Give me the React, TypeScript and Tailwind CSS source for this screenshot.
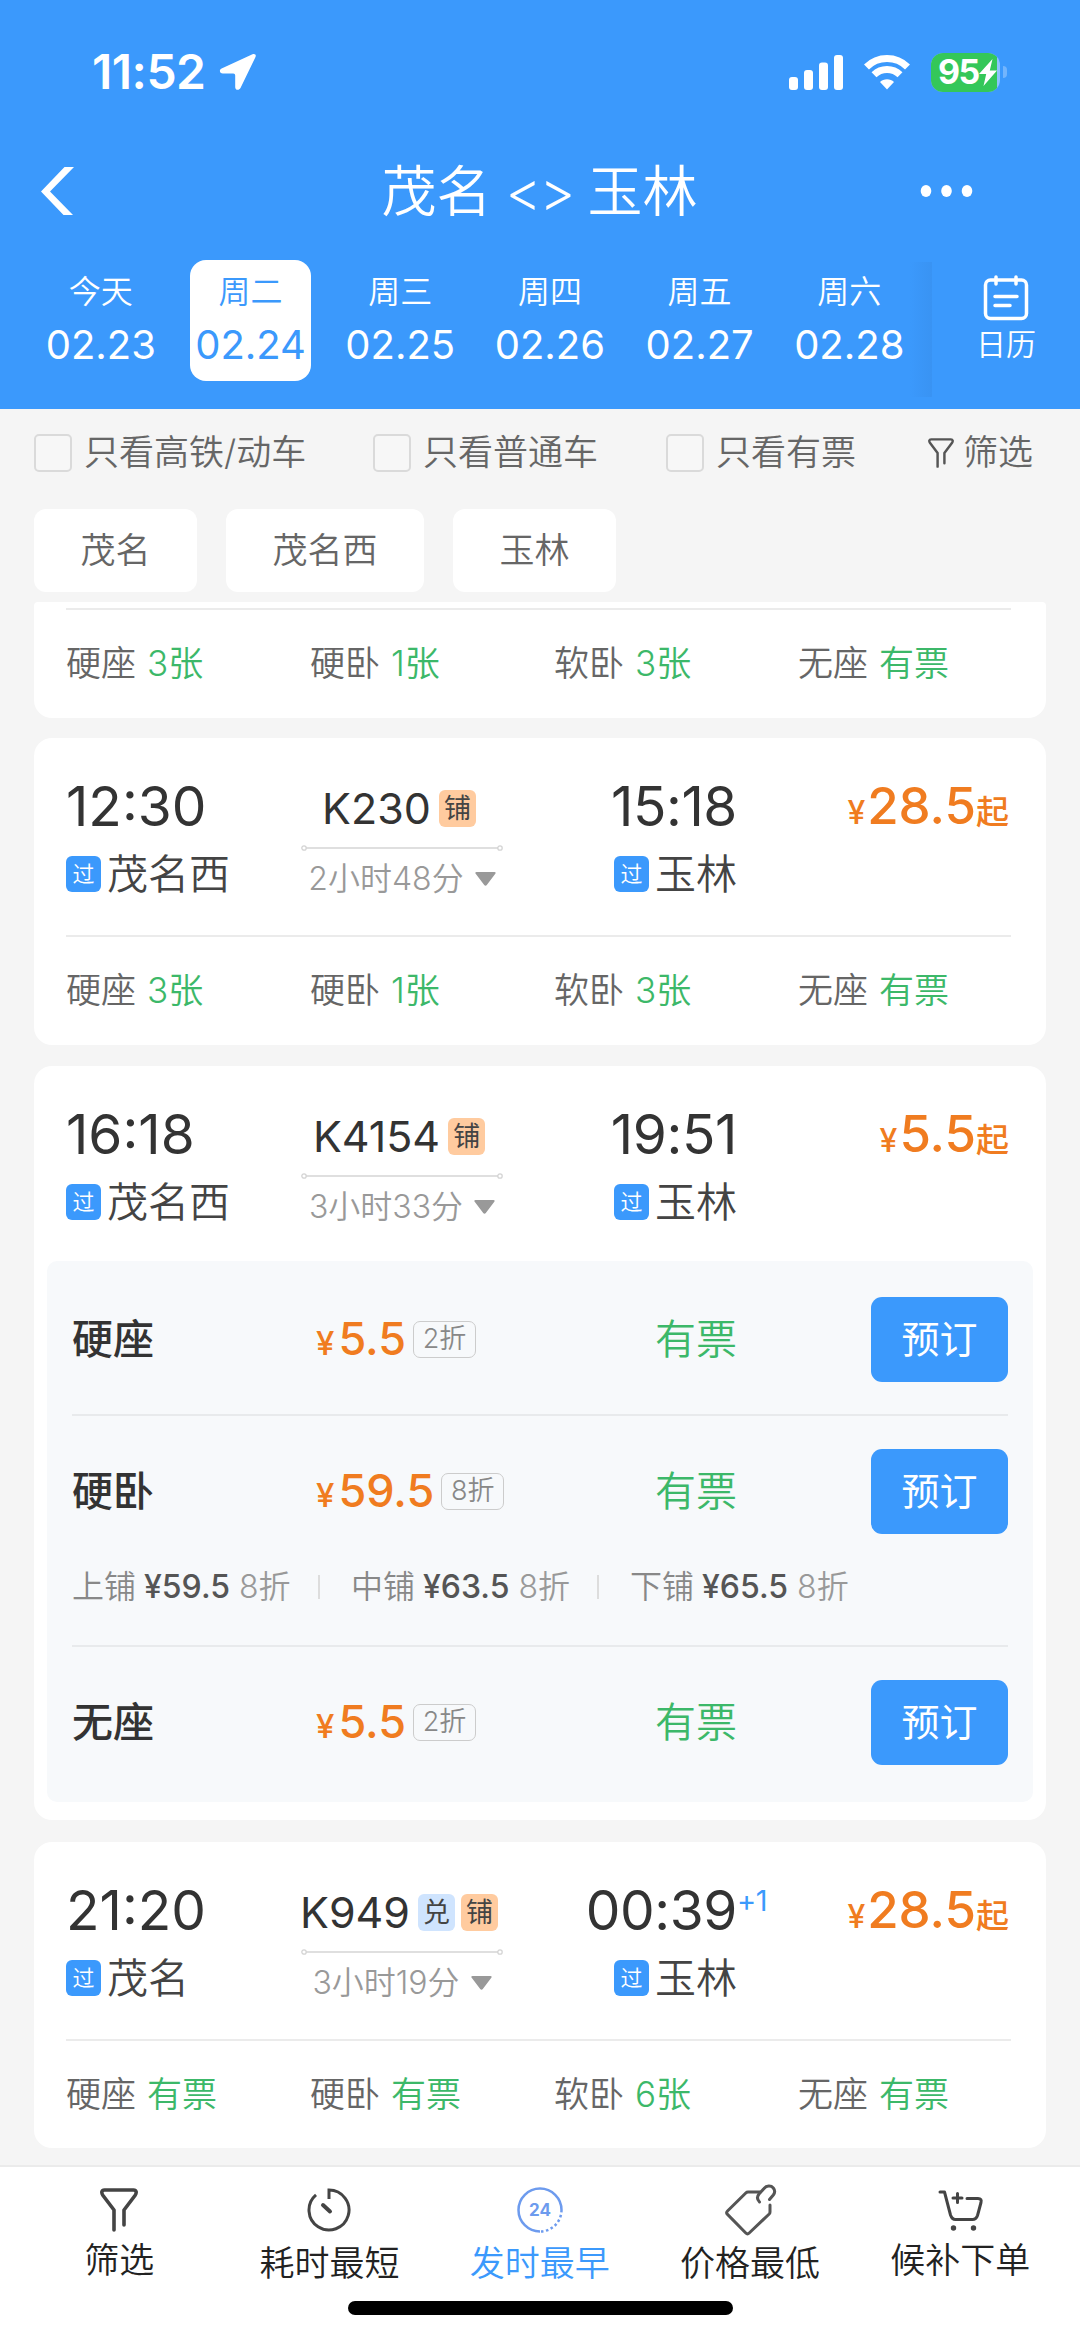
import type { ReactNode } from 'react';

interface Seat {
  name: string;
  left: string;
}

interface Train {
  code: string;
  tags: string[];
  depart: string;
  from: string;
  arrive: string;
  to: string;
  duration: string;
  price: string;
  nextDay?: boolean;
}

const days = [
  { label: '今天', date: '02.23' },
  { label: '周二', date: '02.24', active: true },
  { label: '周三', date: '02.25' },
  { label: '周四', date: '02.26' },
  { label: '周五', date: '02.27' },
  { label: '周六', date: '02.28' },
];

const daySeats: Seat[] = [
  { name: '硬座', left: '3张' },
  { name: '硬卧', left: '1张' },
  { name: '软卧', left: '3张' },
  { name: '无座', left: '有票' },
];

const nightSeats: Seat[] = [
  { name: '硬座', left: '有票' },
  { name: '硬卧', left: '有票' },
  { name: '软卧', left: '6张' },
  { name: '无座', left: '有票' },
];

const k230: Train = {
  code: 'K230', tags: ['铺'], depart: '12:30', from: '茂名西',
  arrive: '15:18', to: '玉林', duration: '2小时48分', price: '28.5',
};

const k4154: Train = {
  code: 'K4154', tags: ['铺'], depart: '16:18', from: '茂名西',
  arrive: '19:51', to: '玉林', duration: '3小时33分', price: '5.5',
};

const k949: Train = {
  code: 'K949', tags: ['兑', '铺'], depart: '21:20', from: '茂名',
  arrive: '00:39', to: '玉林', duration: '3小时19分', price: '28.5', nextDay: true,
};

const berths = [
  { name: '上铺', price: '¥59.5' },
  { name: '中铺', price: '¥63.5' },
  { name: '下铺', price: '¥65.5' },
];

function StatusBar() {
  return (
    <div className="flex h-[144px] items-center justify-between pl-[92px] pr-[73px] text-white">
      <div className="flex items-center gap-[13px]">
        <span className="text-[48px] font-semibold leading-none tracking-[-0.5px]">11:52</span>
        <svg width="38" height="38" viewBox="0 0 38 38" fill="white">
          <path d="M33.5 1.3c2.2-1 4 .5 3 2.7L21.5 35c-1.5 2.8-5.3 2.2-5.3-.8V22.5c0-1.3-.7-2-2-2H3.8C.6 20.5-.2 17 2.6 15.600z" />
        </svg>
      </div>
      <div className="flex items-center">
        <svg width="56" height="38" viewBox="0 0 56 38" fill="white">
          <rect x="1" y="24" width="9" height="13" rx="3" />
          <rect x="16" y="17" width="9" height="20" rx="3" />
          <rect x="31" y="9.5" width="9" height="27.5" rx="3" />
          <rect x="46" y="2" width="9" height="35" rx="3" />
        </svg>
        <svg className="ml-[19px]" width="48" height="36" viewBox="0 0 48 36" fill="none" stroke="white" strokeWidth="7">
          <path d="M3.5 13a29 29 0 0 1 41 0" />
          <path d="M11 20.8a18.5 18.5 0 0 1 26 0" />
          <path d="M24 35.5l-7-7.5c3.6-3.8 10.4-3.8 14 0z" fill="white" stroke="none" />
        </svg>
        <div className="ml-[20px] flex h-[39px] w-[69px] overflow-hidden rounded-[12px] bg-[#8dc3fd]">
          <div className="flex h-full w-[66px] items-center bg-[#34c759] pl-[7px]">
            <span className="text-[34px] font-bold leading-none tracking-[-1.5px]">95</span>
            <svg width="18" height="27" viewBox="0 0 18 27" fill="white">
              <path d="M13.5 0L0 15h7.2L4.5 27 18 11.5h-7.2z" />
            </svg>
          </div>
        </div>
        <div className="ml-[3px] h-[12px] w-[4px] rounded-r-[4px] bg-[#72b5fd]" />
      </div>
    </div>
  );
}

function Header() {
  return (
    <header className="h-[409px] bg-[#3b99fc] text-white">
      <StatusBar />
      <div className="flex h-[94px] items-center justify-between pl-[41px] pr-[107px]">
        <svg width="34" height="48" viewBox="0 0 34 48" fill="white">
          <path d="M23.5 0H33L9 24.5 32 48h-9.5L0 24.5z" />
        </svg>
        <h1 className="ml-[84px] flex text-[55px] font-[350] leading-none">
          <span>茂名</span>
          <span className="mx-[14px] tracking-[-2px]">&lt;&gt;</span>
          <span>玉林</span>
        </h1>
        <svg width="53" height="14" viewBox="0 0 53 14" fill="white">
          <ellipse cx="6" cy="7" rx="5.3" ry="6" />
          <ellipse cx="26.5" cy="7" rx="5.3" ry="6" />
          <ellipse cx="47" cy="7" rx="5.3" ry="6" />
        </svg>
      </div>
      <div className="flex h-[171px] pl-[26px]">
        {days.map((day) => (
          <div key={day.date} className="flex w-[149.7px] shrink-0 justify-center pt-[22px]">
            <div
              className={`flex h-[121px] w-[121px] flex-col items-center rounded-[16px] pt-[15px] ${
                day.active ? 'bg-white text-[#3b99fc]' : ''
              }`}
            >
              <span className="text-[32px] font-[350] leading-[34px]">{day.label}</span>
              <span className="mt-[14px] text-[40px] leading-[44px]">{day.date}</span>
            </div>
          </div>
        ))}
        <div className="-ml-[14px] mt-[24px] h-[135px] w-[22px] bg-gradient-to-r from-[#3b99fc] to-[#3993f3]" />
        <div className="flex flex-1 flex-col items-center pt-[37px]">
          <svg width="46" height="46" viewBox="0 0 46 46" fill="none" stroke="white" strokeWidth="3.5" strokeLinecap="round">
            <rect x="2.5" y="5" width="41" height="38.5" rx="5" />
            <path d="M13 2v7M33 2v7M12 21.5h22M12 30.5h15" />
          </svg>
          <span className="mt-[6px] text-[30px] font-[350] leading-[34px]">日历</span>
        </div>
      </div>
    </header>
  );
}

function Funnel({ width, height, color }: { width: number; height: number; color: string }) {
  return (
    <svg width={width} height={height} viewBox="0 0 38 44" fill="none" stroke={color} strokeWidth="3.6" strokeLinecap="round" strokeLinejoin="round">
      <path d="M14 42V22L3 7.5C1 4.5 1.6 2 4.5 2h29c2.9 0 3.5 2.5 1.5 5.5L24 22v15" />
    </svg>
  );
}

function Check({ label, className }: { label: string; className: string }) {
  return (
    <label className={`flex items-center gap-[12px] ${className}`}>
      <span className="h-[38px] w-[38px] rounded-[5px] border-2 border-[#dadada] bg-[#f7f7f7]" />
      <span>{label}</span>
    </label>
  );
}

function Filters() {
  return (
    <div className="h-[193px] px-[34px] text-[35px] font-[350] text-[#666]">
      <div className="flex h-[87px] items-center">
        <Check label="只看高铁/动车" className="w-[339px]" />
        <Check label="只看普通车" className="w-[293px]" />
        <Check label="只看有票" className="w-[262px]" />
        <Funnel width={26} height={30} color="#555" />
        <span className="ml-[9px]">筛选</span>
      </div>
      <div className="mt-[13px] flex gap-[29px]">
        <span className="flex h-[83px] w-[163px] items-center justify-center rounded-[12px] bg-white">茂名</span>
        <span className="flex h-[83px] w-[198px] items-center justify-center rounded-[12px] bg-white">茂名西</span>
        <span className="flex h-[83px] w-[163px] items-center justify-center rounded-[12px] bg-white">玉林</span>
      </div>
    </div>
  );
}

function Station({ name }: { name: string }) {
  return (
    <div className="flex h-[42px] items-center gap-[6px] text-[41px] font-[350] leading-none text-[#444]">
      <span className="flex h-[36px] w-[35px] items-center justify-center rounded-[6px] bg-[#3b99fc] text-[22px] text-white">过</span>
      {name}
    </div>
  );
}

function TrainInfo({ train }: { train: Train }) {
  return (
    <div className="flex h-[197px] pl-[32px] pr-[37px] pt-[41px]">
      <div className="w-[235px]">
        <div className="h-[54px] text-[55px] leading-[54px] text-[#333]">{train.depart}</div>
        <div className="mt-[20px]">
          <Station name={train.from} />
        </div>
      </div>
      <div className="flex w-[202px] flex-col items-center">
        <div className="mr-[6px] flex h-[58px] items-center gap-[6px]">
          <span className="mr-[2px] text-[43px] leading-none text-[#333]">{train.code}</span>
          {train.tags.map((tag) => (
            <span
              key={tag}
              className={`flex h-[37px] w-[37px] items-center justify-center rounded-[6px] text-[27px] leading-none text-[#444] ${
                tag === '兑' ? 'bg-[#cfe4fe]' : 'bg-[#ffcb9f]'
              }`}
            >
              {tag}
            </span>
          ))}
        </div>
        <svg className="mt-[8px]" width="202" height="6" viewBox="0 0 202 6" fill="none" stroke="#d4d4d4" strokeWidth="1.3">
          <path d="M5 3h192" />
          <circle cx="3" cy="3" r="2.2" />
          <circle cx="199" cy="3" r="2.2" />
        </svg>
        <div className="mt-[9px] flex items-center gap-[11px] text-[32px] font-[350] leading-[38px] text-[#999]">
          <span>{train.duration}</span>
          <svg width="21" height="14" viewBox="0 0 21 14" fill="#999">
            <path d="M1.5 0h18c1.2 0 1.5 1 .8 1.8L11.800 13c-.8 1-1.8 1-2.6 0L.7 1.8C0 1 .3 0 1.5 0z" />
          </svg>
        </div>
      </div>
      <div className="flex w-[234px] flex-col items-end">
        <div className="relative h-[54px] text-[55px] leading-[54px] tracking-[-0.4px] text-[#333]">
          {train.arrive}
          {train.nextDay && (
            <span className="absolute left-full top-[-2px] text-[29px] leading-[40px] text-[#3b99fc]">+1</span>
          )}
        </div>
        <div className="mt-[20px]">
          <Station name={train.to} />
        </div>
      </div>
      <div className="flex h-[54px] flex-1 items-baseline justify-end font-medium leading-[54px] text-[#f07c20]">
        <span className="mr-[2px] text-[32px]">¥</span>
        <span className="text-[51px]">{train.price}</span>
        <span className="text-[33px]">起</span>
      </div>
    </div>
  );
}

function SeatRow({ seats }: { seats: Seat[] }) {
  return (
    <div className="ml-[32px] mr-[35px] flex h-[108px] border-t-2 border-[#ebebeb] text-[35px] font-[350] text-[#666]">
      {seats.map((seat) => (
        <div key={seat.name} className="flex w-[244px] shrink-0 items-center gap-[11px]">
          <span>{seat.name}</span>
          <span className="text-[#3cb869]">{seat.left}</span>
        </div>
      ))}
    </div>
  );
}

function Card({ children, className }: { children: ReactNode; className: string }) {
  return <section className={`mx-[34px] overflow-hidden rounded-[18px] bg-white ${className}`}>{children}</section>;
}

function Offer({ name, price, discount }: { name: string; price: string; discount: string }) {
  return (
    <div className="flex h-[85px] items-center">
      <span className="w-[244px] text-[41px] font-medium text-[#333]">{name}</span>
      <div className="flex w-[339px] items-center">
        <div className="mt-[5px] flex items-baseline font-medium text-[#f07c20]">
          <span className="mr-[4px] text-[33px]">¥</span>
          <span className="text-[45px] leading-none">{price}</span>
        </div>
        <span className="ml-[7px] flex h-[37px] w-[63px] items-center justify-center rounded-[7px] border-[1.5px] border-[#ccc] text-[27px] font-[350] text-[#888]">
          {discount}
        </span>
      </div>
      <span className="text-[41px] font-[350] text-[#3cb869]">有票</span>
      <button className="ml-auto h-[85px] w-[137px] rounded-[11px] bg-[#3b99fc] text-[38px] text-white">预订</button>
    </div>
  );
}

function OfferPanel() {
  return (
    <div className="mx-[13px] -mt-[2px] h-[541px] rounded-[10px] bg-[#f7f9fb] px-[25px] pt-[36px]">
      <Offer name="硬座" price="5.5" discount="2折" />
      <div className="mt-[32px] border-t-2 border-[#e8eaec] pt-[33px]">
        <Offer name="硬卧" price="59.5" discount="8折" />
      </div>
      <div className="mt-[31px] flex h-[44px] items-center text-[32px] font-[350] text-[#888]">
        {berths.map((berth, i) => (
          <div key={berth.name} className="flex w-[279px] shrink-0 items-center">
            <span>{berth.name}</span>
            <span className="ml-[8px] font-medium text-[#555]">{berth.price}</span>
            <span className="ml-[9px] text-[#999]">8折</span>
            {i < 2 && <span className="ml-[27px] h-[24px] w-[2px] bg-[#ddd]" />}
          </div>
        ))}
      </div>
      <div className="mt-[36px] border-t-2 border-[#e8eaec] pt-[33px]">
        <Offer name="无座" price="5.5" discount="2折" />
      </div>
    </div>
  );
}

function Tab({ label, icon, className = '' }: { label: string; icon: ReactNode; className?: string }) {
  return (
    <div className="flex w-[210.3px] flex-col items-center">
      <div className="flex h-[52px] items-center justify-center">{icon}</div>
      <span className={`text-[35px] font-[350] leading-[40px] ${className}`}>{label}</span>
    </div>
  );
}

function BottomBar() {
  return (
    <nav className="h-[172px] border-t-2 border-[#ebebeb] bg-white text-[#222]">
      <div className="flex h-[134px] pl-[14px] pt-[17px]">
        <Tab label="筛选" icon={<Funnel width={38} height={44} color="#444" />} className="mt-[4px]" />
        <Tab
          label="耗时最短"
          className="mt-[7px]"
          icon={
            <svg width="46" height="46" viewBox="0 0 46 46" fill="none" stroke="#444" strokeWidth="3">
              <path d="M23 12V3a20 20 0 1 1-13 4.8" />
              <path d="M17 18l7 6.5" strokeWidth="4" strokeLinecap="round" />
            </svg>
          }
        />
        <Tab
          label="发时最早"
          className="mt-[7px] text-[#3b99fc]"
          icon={
            <svg width="46" height="46" viewBox="0 0 46 46" fill="none" stroke="#6d9bee" strokeWidth="2.5">
              <path d="M23 44.500a21.500 21.500 0 1 1 21.500-21.500" />
              <path d="M44.500 23A21.500 21.500 0 0 1 23 44.500" strokeDasharray="2.5 2.5" />
              <text x="23" y="29" textAnchor="middle" fontSize="17" fontWeight="700" fill="#6d9bee" stroke="none">24</text>
            </svg>
          }
        />
        <Tab
          label="价格最低"
          className="mt-[7px]"
          icon={
            <svg className="ml-[1px]" width="52" height="52" viewBox="0 0 52 52" fill="none" stroke="#555" strokeWidth="3" strokeLinecap="round" strokeLinejoin="round">
              <path d="M35 8H23c-1 0-1.500.3-2.200 1L2.500 27c-1 1-1 2.400 0 3.400L20.800 49c1 1 2.400 1 3.400 0l20-19c.5-.5.8-1.200.8-2v-7" />
              <path d="M34.500 18c-2.500-2.500-2.500-5.500-.5-8l5-5.500c2.500-3 7-3.200 9.300-.5 2 2.500 1.500 5 0 7L44.500 15.500" />
            </svg>
          }
        />
        <Tab
          label="候补下单"
          className="mt-[4px]"
          icon={
            <svg className="ml-[2px]" width="46" height="44" viewBox="0 0 46 44" fill="none" stroke="#444" strokeWidth="3" strokeLinecap="round" strokeLinejoin="round">
              <path d="M2 4h4.500l6 23c1 3 2.500 4.500 5 4.500h17c2.500 0 4-1 5-4l3.500-13c.6-2.500 0-4-3-4H29M15 10h9M19.500 5.500v9" />
              <circle cx="15.5" cy="40" r="1.7" fill="#444" strokeWidth="2" />
              <circle cx="35.5" cy="40" r="1.7" fill="#444" strokeWidth="2" />
            </svg>
          }
        />
      </div>
      <div className="mx-auto h-[14px] w-[385px] rounded-full bg-black" />
    </nav>
  );
}

export default function App() {
  return (
    <div className="flex h-[2337px] w-[1080px] flex-col overflow-hidden bg-[#f5f5f5] font-[Inter,'Noto_Sans_CJK_SC',sans-serif]">
      <Header />
      <Filters />
      <main className="flex flex-1 flex-col">
        {/* tail of the previous train, scrolled under the filters */}
        <Card className="h-[116px] rounded-t-[4px] pt-[6px]">
          <SeatRow seats={daySeats} />
        </Card>
        <Card className="mt-[20px] h-[307px]">
          <TrainInfo train={k230} />
          <SeatRow seats={daySeats} />
        </Card>
        <Card className="mt-[21px] h-[754px]">
          <TrainInfo train={k4154} />
          <OfferPanel />
        </Card>
        <Card className="mt-[22px] h-[306px]">
          <TrainInfo train={k949} />
          <SeatRow seats={nightSeats} />
        </Card>
      </main>
      <BottomBar />
    </div>
  );
}
